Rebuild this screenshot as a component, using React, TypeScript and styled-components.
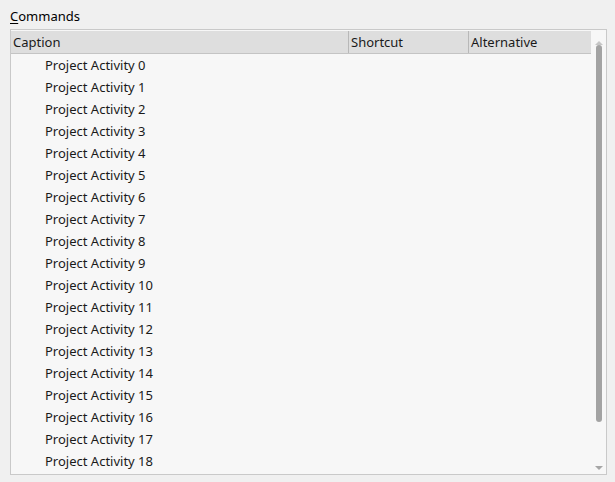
import styled, { createGlobalStyle } from "styled-components";

// ─── Global ───────────────────────────────────────────────────────────────────

const GlobalStyle = createGlobalStyle`
  html, body { margin: 0; padding: 0; background: #f0f0f0; }
  body {
    font-family: "Segoe UI", "Noto Sans", "Open Sans", Arial, sans-serif;
    font-size: 13px;
    color: #000;
  }
`;

// ─── Data ─────────────────────────────────────────────────────────────────────

const COLUMNS = [
  { key: "caption", label: "Caption", width: 338 },
  { key: "shortcut", label: "Shortcut", width: 120 },
  { key: "alternative", label: "Alternative", width: 0 },
];

const ROWS = Array.from({ length: 19 }, (_, i) => `Project Activity ${i}`);

// ─── Styled ───────────────────────────────────────────────────────────────────

const Page = styled.div`
  width: 615px;
  height: 482px;
  padding: 7px 8px 0 10px;
  box-sizing: border-box;
  display: flex;
  flex-direction: column;
`;

const GroupLabel = styled.div`
  height: 22px;
  line-height: 18px;
  u { text-decoration: underline; text-underline-offset: 2px; }
`;

const ListBox = styled.div`
  width: 597px;
  height: 446px;
  box-sizing: border-box;
  border: 1px solid #c9c9c9;
  background: #f7f7f7;
  display: flex;
  overflow: hidden;
`;

const ListMain = styled.div`
  flex: 1;
  display: flex;
  flex-direction: column;
  min-width: 0;
`;

const HeaderRow = styled.div`
  display: flex;
  flex-shrink: 0;
  height: 23px;
  margin-top: 1px;
  background: #dedede;
  border-bottom: 1px solid #c4c4c4;
  box-sizing: border-box;
`;

const HeaderCell = styled.div<{ $width: number }>`
  ${({ $width }) => ($width ? `width: ${$width}px;` : "flex: 1;")}
  padding: 1px 0 0 2px;
  line-height: 21px;
  border-right: ${({ $width }) => ($width ? "1px solid #b8b8b8" : "none")};
  box-sizing: border-box;
  white-space: nowrap;
  color: #1a1a1a;
`;

const Row = styled.div`
  flex-shrink: 0;
  height: 22px;
  line-height: 22px;
  padding-left: 34px;
  white-space: nowrap;
  color: #1a1a1a;
`;

const ScrollBar = styled.div`
  width: 15px;
  display: flex;
  flex-direction: column;
  align-items: center;
  padding: 11px 0 4px;
  box-sizing: border-box;
  background: #f7f7f7;
`;

const Arrow = styled.div<{ $down?: boolean }>`
  width: 0;
  height: 0;
  border-left: 4px solid transparent;
  border-right: 4px solid transparent;
  ${({ $down }) =>
    $down ? "border-top: 4px solid #a6a6a6;" : "border-bottom: 4px solid #c6c6c6;"}
`;

const Track = styled.div`
  flex: 1;
  width: 6px;
  display: flex;
  flex-direction: column;
`;

const Thumb = styled.div`
  height: 377px;
  width: 6px;
  border-radius: 3px;
  background: #a3a3a3;
`;

// ─── Component ────────────────────────────────────────────────────────────────

export default function App() {
  return (
    <>
      <GlobalStyle />
      <Page>
        <GroupLabel>
          <u>C</u>ommands
        </GroupLabel>
        <ListBox>
          <ListMain>
            <HeaderRow>
              {COLUMNS.map((c) => (
                <HeaderCell key={c.key} $width={c.width}>
                  {c.label}
                </HeaderCell>
              ))}
            </HeaderRow>
            {ROWS.map((r) => (
              <Row key={r}>{r}</Row>
            ))}
          </ListMain>
          <ScrollBar>
            <Arrow />
            <Track>
              <Thumb />
            </Track>
            <Arrow $down />
          </ScrollBar>
        </ListBox>
      </Page>
    </>
  );
}
